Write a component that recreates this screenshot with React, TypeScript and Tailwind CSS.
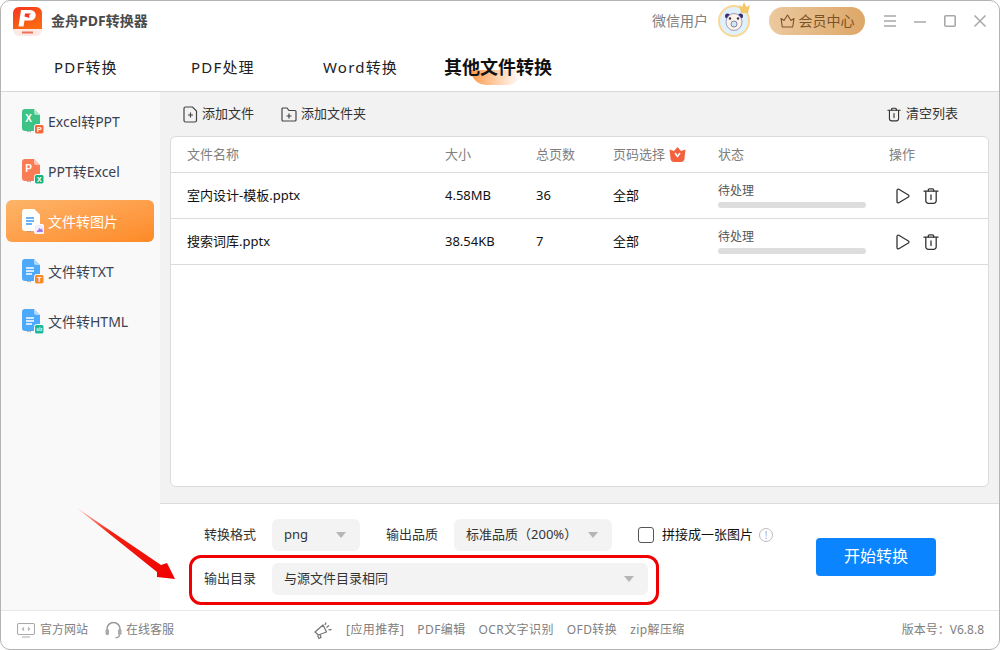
const font = { fontFamily: '"Noto Sans", "Noto Sans CJK SC", sans-serif' };

function FileBadgeIcon({ body, badge, mark, badgeMark, active }: { body: string; badge: string; mark?: string; badgeMark: string; active?: boolean }) {
    return (
        <svg width="22" height="25" viewBox="0 0 22 25" className="shrink-0">
            <path d="M5 22.500q2-1.500 4 .5" stroke="#9a9a9a" strokeWidth="1" fill="none" />
            <path d="M3 0h9l6 6v13a3 3 0 0 1-3 3H3a3 3 0 0 1-3-3V3a3 3 0 0 1 3-3z" fill={body} />
            <path d="M12 0l6 6h-4a2 2 0 0 1-2-2z" fill="#ffffff" opacity={active ? 1 : 0.55} stroke={active ? '#f5f5f5' : 'none'} strokeWidth="0.5" />
            {mark ? (
                <text x="6.500" y="13" fontSize="10" fontWeight="700" fill="#ffffff" textAnchor="middle" fontFamily="Liberation Sans">{mark}</text>
            ) : (
                <path d="M4 9h8M4 12h8M4 15h6" stroke={active ? '#3b9bf5' : '#ffffff'} strokeWidth="1.300" />
            )}
            <rect x="12.500" y="15.500" width="9.500" height="9.500" rx="2" fill={badge} stroke="#ffffff" strokeWidth="1" />
            {active ? (
                <path d="M14.500 23l3-4 1.500 1.500 1-1 1 3.500z" fill="#a878e8" />
            ) : (
                <text x="17.250" y={badgeMark.length > 1 ? 22 : 23} fontSize={badgeMark.length > 1 ? 4.500 : 7.500} fontWeight="700" fill="#ffffff" textAnchor="middle" fontFamily="Liberation Sans">{badgeMark}</text>
            )}
        </svg>
    );
}

function TrashIcon({ className }: { className?: string }) {
    return (
        <svg className={className} width="16" height="16" viewBox="0 0 16 16" fill="none" stroke="#333" strokeWidth="1.300" strokeLinecap="round" strokeLinejoin="round">
            <path d="M1 3.200h14" />
            <path d="M5.300 3V2a1.200 1.200 0 0 1 1.200-1.200h3a1.200 1.200 0 0 1 1.200 1.200v1" />
            <path d="M2.800 3.500v9.300a2.500 2.500 0 0 0 2.500 2.500h5.400a2.500 2.500 0 0 0 2.500-2.500V3.500" />
            <path d="M8 7v4.500" />
        </svg>
    );
}

function Select({ text, className }: { text: string; className: string }) {
    return (
        <div className={`h-8 bg-[#f3f3f3] rounded-md flex items-center justify-between pl-3 text-[13px] text-[#333] ${className}`}>
            <span>{text}</span>
            <span className="mr-[14px] w-0 h-0 border-x-[5px] border-x-transparent border-t-[6px] border-t-[#b5b5b5]" />
        </div>
    );
}

const sideItems = [
    { label: 'Excel转PPT', body: '#3cc487', badge: '#f4683a', mark: 'X', badgeMark: 'P' },
    { label: 'PPT转Excel', body: '#f97c55', badge: '#17b27b', mark: 'P', badgeMark: 'X' },
    { label: '文件转图片', body: '#ffffff', badge: '#f3ecfb', active: true, badgeMark: '' },
    { label: '文件转TXT', body: '#4da9fb', badge: '#f78a23', badgeMark: 'T' },
    { label: '文件转HTML', body: '#4da9fb', badge: '#1cb99a', badgeMark: 's/z' },
];

const rows = [
    { name: '室内设计-模板.pptx', size: '4.58MB', pages: '36' },
    { name: '搜索词库.pptx', size: '38.54KB', pages: '7' },
];

export default function App() {
    return (
        <div style={font} className="relative w-[1000px] h-[650px] bg-white overflow-hidden flex flex-col rounded-[10px] border border-[#b4b4b4] text-[#333]">
            {/* title bar */}
            <div className="h-[40px] shrink-0 flex items-center pl-[12px] pr-[13px]">
                <svg width="29" height="29" viewBox="0 0 29 29">
                    <defs>
                        <linearGradient id="logo" x1="0" y1="0" x2="0.6" y2="1">
                            <stop offset="0" stopColor="#f5351f" />
                            <stop offset="1" stopColor="#fb6a12" />
                        </linearGradient>
                    </defs>
                    <rect width="29" height="29" rx="6" fill="#fdeae4" />
                    <path d="M6 0h17a6 6 0 0 1 6 6v16H0V6a6 6 0 0 1 6-6z" fill="url(#logo)" />
                    <path d="M8 3h9.500a5 5 0 0 1 0 10.500h-6l-1 6H5.500z" fill="#ffffff" />
                    <path d="M12 6.500h6l-2 2 .5 2.500-5-1.500z" fill="#f5351f" />
                    <rect x="9" y="24.500" width="11" height="2" fill="#f0705a" />
                </svg>
                <span className="ml-[9px] text-[14px] font-bold text-[#4a4a4a] leading-none">金舟PDF转换器</span>
                <div className="ml-auto flex items-center">
                    <span className="text-[14px] text-[#808080] mb-[2px]">微信用户</span>
                    <div className="relative ml-[10px] w-8 h-8 rounded-full bg-[#dff1fa] border-2 border-[#fbd694] flex items-center justify-center">
                        <svg width="22" height="22" viewBox="0 0 22 22">
                            <circle cx="4.500" cy="6" r="2.500" fill="#3c2d70" />
                            <circle cx="17.500" cy="6" r="2.500" fill="#3c2d70" />
                            <ellipse cx="11" cy="12" rx="8" ry="8.500" fill="#fbf3e4" stroke="#6d64a8" strokeWidth="0.600" />
                            <circle cx="7" cy="8.500" r="1.200" fill="#3c2d70" />
                            <circle cx="15" cy="8.500" r="1.200" fill="#3c2d70" />
                            <circle cx="11" cy="14" r="3" fill="#cfe8f6" stroke="#6d64a8" strokeWidth="0.800" />
                        </svg>
                        <svg className="absolute -top-[5px] -right-[3px]" width="13" height="11" viewBox="0 0 13 11">
                            <path d="M1 3l3 2 2-5 2.500 5L12 3l-2 8H3z" fill="#f5c96a" />
                        </svg>
                    </div>
                    <div className="ml-[19px] w-[96px] h-7 rounded-full bg-gradient-to-r from-[#ebc99f] to-[#dda766] flex items-center justify-center gap-[4px] text-[14px] text-[#7a5228]">
                        <svg width="15" height="14" viewBox="0 0 15 14" fill="none" stroke="#7a5228" strokeWidth="1.100" strokeLinejoin="round">
                            <path d="M1 4.500l3 2L7.500 1 11 6.500l3-2-1.300 8.500H2.300z" />
                        </svg>
                        <span className="mb-[2px]">会员中心</span>
                    </div>
                    <div className="ml-[19px] flex items-center gap-[18px]">
                        <svg width="12" height="12" viewBox="0 0 12 12" stroke="#a8a8a8" strokeWidth="1.500"><path d="M0 1h12M0 6h12M0 11h12" /></svg>
                        <svg width="12" height="12" viewBox="0 0 12 12" stroke="#a8a8a8" strokeWidth="1.500"><path d="M0 7h12" /></svg>
                        <svg width="12" height="12" viewBox="0 0 12 12" fill="none" stroke="#a8a8a8" strokeWidth="1.600"><rect x="0.800" y="0.800" width="10.400" height="10.400" rx="1" /></svg>
                        <svg width="12" height="12" viewBox="0 0 12 12" stroke="#a8a8a8" strokeWidth="1.500"><path d="M0.500 0.500l11 11M11.500 0.500l-11 11" /></svg>
                    </div>
                </div>
            </div>

            {/* tabs */}
            <div className="h-[51px] shrink-0 flex items-center border-b border-[#d8d8d8] pl-[53px] pt-[2px] text-[15px] text-[#222] tracking-[1.200px]">
                <span className="w-[137px]">PDF转换</span>
                <span className="w-[132px]">PDF处理</span>
                <span className="w-[121px]">Word转换</span>
                <span className="relative text-[18px] font-bold tracking-normal text-[#111] leading-none">
                    <span className="absolute left-[27px] top-[12px] w-[51px] h-[15px] rounded-b-full bg-gradient-to-r from-[#fb9a46] to-[#ffffff]" />
                    <span className="relative">其他文件转换</span>
                </span>
            </div>

            <div className="flex-1 flex min-h-0">
                {/* sidebar */}
                <div className="w-[159px] shrink-0 bg-[#f9f9f9] pl-[5px] pr-[6px] pt-[8px] flex flex-col gap-2">
                    {sideItems.map((item) => (
                        <div
                            key={item.label}
                            className={`h-[42px] rounded-md flex items-center pl-[16px] gap-[4px] text-[14px] ${item.active ? 'bg-gradient-to-br from-[#fdb468] to-[#fd8a24] text-white' : 'text-[#3a4252]'}`}
                        >
                            <FileBadgeIcon body={item.body} badge={item.badge} mark={item.mark} badgeMark={item.badgeMark} active={item.active} />
                            <span>{item.label}</span>
                        </div>
                    ))}
                </div>

                <div className="flex-1 flex flex-col min-w-0">
                    <div className="flex-1 bg-[#f2f2f2] flex flex-col min-h-0 pl-[10px] pr-[10px] pb-[16px]">
                        {/* toolbar */}
                        <div className="h-[44px] shrink-0 flex items-center pl-[13px] pr-[31px] text-[13px] text-[#333]">
                            <svg width="15" height="17" viewBox="0 0 15 17" fill="none" stroke="#444" strokeWidth="1.200">
                                <path d="M2.500 1h7l4 4v9.500a1.500 1.500 0 0 1-1.500 1.500h-9.500a1.500 1.500 0 0 1-1.500-1.500v-12a1.500 1.500 0 0 1 1.500-1.500z" />
                                <path d="M5 9h5M7.500 6.500v5" />
                            </svg>
                            <span className="ml-[4px]">添加文件</span>
                            <svg className="ml-[27px]" width="16" height="15" viewBox="0 0 16 15" fill="none" stroke="#444" strokeWidth="1.200">
                                <path d="M1 2a1 1 0 0 1 1-1h4l2 2.500h6a1 1 0 0 1 1 1v8.500a1 1 0 0 1-1 1h-12a1 1 0 0 1-1-1z" />
                                <path d="M5.500 9h5M8 6.500v5" />
                            </svg>
                            <span className="ml-[4px]">添加文件夹</span>
                            <TrashIcon className="ml-auto w-[14px] h-[15px]" />
                            <span className="ml-[5px]">清空列表</span>
                        </div>

                        {/* file table */}
                        <div className="flex-1 bg-white rounded-md border border-[#dcdcdc] min-h-0">
                            <div className="h-[36px] flex items-center border-b border-[#dcdcdc] text-[13px] text-[#808080]">
                                <span className="ml-[16px] w-[258px]">文件名称</span>
                                <span className="w-[91px]">大小</span>
                                <span className="w-[77px]">总页数</span>
                                <span className="w-[105px] flex items-center gap-[4px]">
                                    页码选择
                                    <svg width="17" height="15" viewBox="0 0 17 15">
                                        <path d="M8.500 0l3.500 4 4.500-1.500-1 8.500a3.500 3.500 0 0 1-3.500 4h-7a3.500 3.500 0 0 1-3.500-4l-1-8.500 4.500 1.500z" fill="#f4613f" />
                                        <path d="M6 6l2.500 3.500L11 6" stroke="#ffffff" strokeWidth="1.500" fill="none" />
                                    </svg>
                                </span>
                                <span className="w-[171px]">状态</span>
                                <span>操作</span>
                            </div>
                            {rows.map((r) => (
                                <div key={r.name} className="h-[46px] flex items-center border-b border-[#dcdcdc] text-[13px] text-[#111]">
                                    <span className="ml-[16px] w-[258px]">{r.name}</span>
                                    <span className="w-[91px]">{r.size}</span>
                                    <span className="w-[77px]">{r.pages}</span>
                                    <span className="w-[105px]">全部</span>
                                    <div className="w-[171px]">
                                        <div className="text-[12px] leading-[16px] text-[#555]">待处理</div>
                                        <div className="mt-[3px] w-[148px] h-[6px] rounded-full bg-[#dddddd]" />
                                    </div>
                                    <div className="ml-[7px] flex items-center gap-[13px]">
                                        <svg width="14" height="16" viewBox="0 0 14 16" fill="none" stroke="#333" strokeWidth="1.300" strokeLinejoin="round">
                                            <path d="M1 2.300a1.200 1.200 0 0 1 1.800-1l9.600 5.700a1.200 1.200 0 0 1 0 2l-9.600 5.700a1.200 1.200 0 0 1-1.800-1z" />
                                        </svg>
                                        <TrashIcon />
                                    </div>
                                </div>
                            ))}
                        </div>
                    </div>

                    {/* output settings */}
                    <div className="h-[107px] shrink-0 border-t border-[#dcdcdc] flex items-center pl-[30px] relative">
                        <div className="flex flex-col gap-[12px]">
                            <div className="flex items-center text-[13px] text-[#333]">
                                <span className="w-[67px] pl-[14px] whitespace-nowrap">转换格式</span>
                                <Select text="png" className="w-[88px] ml-[15px]" />
                                <span className="ml-[26px]">输出品质</span>
                                <Select text="标准品质（200%）" className="w-[158px] ml-[16px]" />
                                <span className="ml-[26px] w-4 h-4 rounded-[3px] border border-[#555] bg-white" />
                                <span className="ml-[8px] text-[#111]">拼接成一张图片</span>
                                <span className="ml-[6px] w-[14px] h-[14px] rounded-full border border-[#bbb] text-[#aaa] text-[10px] leading-[12px] text-center">!</span>
                            </div>
                            <div className="flex items-center text-[13px] text-[#333]">
                                <span className="w-[67px] pl-[14px] whitespace-nowrap">输出目录</span>
                                <Select text="与源文件目录相同" className="w-[376px] ml-[15px]" />
                            </div>
                        </div>
                        <div className="ml-auto mr-[63px] w-[120px] h-[38px] rounded-[4px] bg-[#0a84ff] text-white text-[16px] flex items-center justify-center pb-[2px]">开始转换</div>
                        {/* annotation outline */}
                        <div className="absolute left-[29px] top-[51px] w-[470px] h-[50px] rounded-[12px] border-[3px] border-[#f00000] pointer-events-none" />
                    </div>
                </div>
            </div>

            {/* footer */}
            <div className="h-[39px] shrink-0 border-t border-[#e8e8e8] flex items-center pl-[16px] pr-[15px] text-[12px] text-[#808080]">
                <svg width="18" height="15" viewBox="0 0 18 15" fill="none" stroke="#aaa" strokeWidth="1.100">
                    <rect x="0.500" y="0.500" width="17" height="11" rx="1.500" />
                    <path d="M5 14h8M7 7.500L5.500 6 7 4.500M11 7.500L12.500 6 11 4.500" />
                </svg>
                <span className="ml-[5px]">官方网站</span>
                <svg className="ml-[17px]" width="17" height="18" viewBox="0 0 17 18" fill="none">
                    <path d="M2 10V8a6.500 6.500 0 0 1 13 0v2" stroke="#999" strokeWidth="1.500" />
                    <rect x="0.500" y="8" width="3.500" height="6" rx="1.500" fill="#aaa" />
                    <rect x="13" y="8" width="3.500" height="6" rx="1.500" fill="#aaa" />
                    <path d="M14.500 14q0 2.500-4 2.800" stroke="#999" strokeWidth="1.200" />
                </svg>
                <span className="ml-[4px]">在线客服</span>
                <svg className="ml-[140px]" width="19" height="19" viewBox="0 0 19 19" fill="none" stroke="#777" strokeWidth="1.300" strokeLinejoin="round">
                    <path d="M1 11l8-7 3.500 7-8 3z" />
                    <path d="M3.500 14.500l1.500 3 2-1-1-3" />
                    <path d="M12 1.500l-1 2.500M15 4.500l-2.500 2M17.500 8.500l-3 .3" />
                </svg>
                <div className="ml-[13px] flex items-center gap-[13px] tracking-[0.4px]">
                    <span>[应用推荐]</span>
                    <span>PDF编辑</span>
                    <span>OCR文字识别</span>
                    <span>OFD转换</span>
                    <span>zip解压缩</span>
                </div>
                <span className="ml-auto">版本号：V6.8.8</span>
            </div>

            {/* annotation arrow */}
            <svg className="absolute left-[70px] top-[500px] pointer-events-none" width="110" height="85" viewBox="0 0 110 85">
                <defs>
                    <linearGradient id="arrow" x1="0" y1="0" x2="1" y2="1">
                        <stop offset="0" stopColor="#ffc0b8" />
                        <stop offset="0.35" stopColor="#f02010" />
                        <stop offset="1" stopColor="#f00000" />
                    </linearGradient>
                </defs>
                <path d="M6 7L90 64l6-2 8 16-18-2 0-5z" fill="url(#arrow)" />
            </svg>
        </div>
    );
}
